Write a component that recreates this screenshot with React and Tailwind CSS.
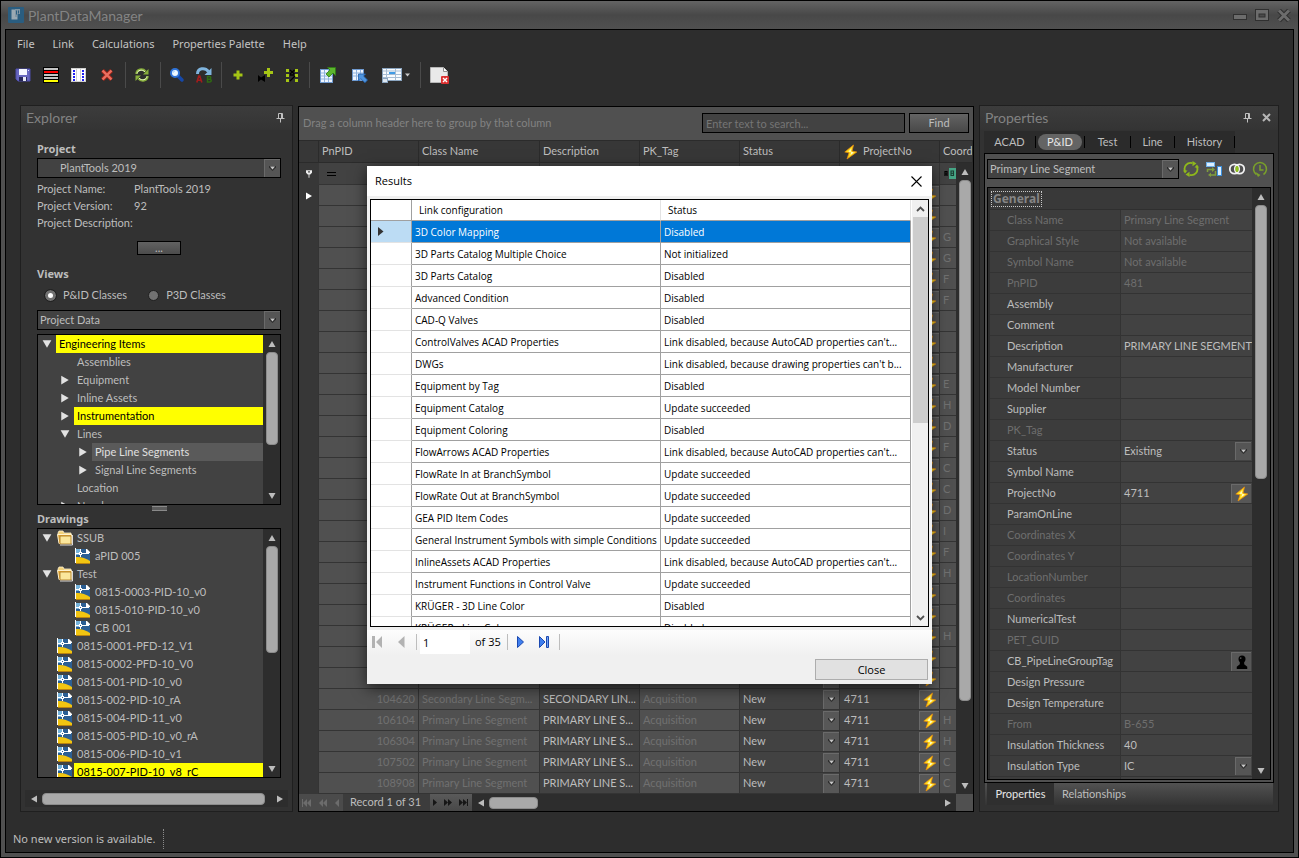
import React, { useState } from 'react';
import clsx from 'clsx';

const viewTree = [
  { label: 'Engineering Items', level: 0, open: true, mark: true },
  { label: 'Assemblies', level: 1 },
  { label: 'Equipment', level: 1, open: false },
  { label: 'Inline Assets', level: 1, open: false },
  { label: 'Instrumentation', level: 1, open: false, mark: true },
  { label: 'Lines', level: 1, open: true },
  { label: 'Pipe Line Segments', level: 2, open: false, selected: true },
  { label: 'Signal Line Segments', level: 2, open: false },
  { label: 'Location', level: 1 },
  { label: 'Nozzles', level: 1, open: false },
];

const drawingTree = [
  { label: 'SSUB', level: 0, open: true, icon: 'folder' },
  { label: 'aPID 005', level: 1, icon: 'file' },
  { label: 'Test', level: 0, open: true, icon: 'folder' },
  { label: '0815-0003-PID-10_v0', level: 1, icon: 'file' },
  { label: '0815-010-PID-10_v0', level: 1, icon: 'file' },
  { label: 'CB 001', level: 1, icon: 'file' },
  { label: '0815-0001-PFD-12_V1', level: 0, icon: 'file' },
  { label: '0815-0002-PFD-10_V0', level: 0, icon: 'file' },
  { label: '0815-001-PID-10_v0', level: 0, icon: 'file' },
  { label: '0815-002-PID-10_rA', level: 0, icon: 'file' },
  { label: '0815-004-PID-11_v0', level: 0, icon: 'file' },
  { label: '0815-005-PID-10_v0_rA', level: 0, icon: 'file' },
  { label: '0815-006-PID-10_v1', level: 0, icon: 'file' },
  { label: '0815-007-PID-10_v8_rC', level: 0, icon: 'file', mark: true },
];

const coords = ['', '', 'G', 'G', 'F', 'F', '', '', '', 'E', 'H', 'D', 'F', 'C', 'C', 'D', 'I', 'F', 'H', '', '', 'H', '', '', '', 'H', 'H', 'C', 'C'];

const records = {
  24: ['104620', 'Secondary Line Segm...', 'SECONDARY LIN...', 'Acquisition', 'New', '4711'],
  25: ['106104', 'Primary Line Segment', 'PRIMARY LINE S...', 'Acquisition', 'New', '4711'],
  26: ['106304', 'Primary Line Segment', 'PRIMARY LINE S...', 'Acquisition', 'New', '4711'],
  27: ['107502', 'Primary Line Segment', 'PRIMARY LINE S...', 'Acquisition', 'New', '4711'],
  28: ['108908', 'Primary Line Segment', 'PRIMARY LINE S...', 'Acquisition', 'New', '4711'],
};

const properties = [
  { name: 'Class Name', value: 'Primary Line Segment', off: true },
  { name: 'Graphical Style', value: 'Not available', off: true },
  { name: 'Symbol Name', value: 'Not available', off: true },
  { name: 'PnPID', value: '481', off: true },
  { name: 'Assembly' },
  { name: 'Comment' },
  { name: 'Description', value: 'PRIMARY LINE SEGMENT' },
  { name: 'Manufacturer' },
  { name: 'Model Number' },
  { name: 'Supplier' },
  { name: 'PK_Tag', off: true },
  { name: 'Status', value: 'Existing', type: 'select' },
  { name: 'Symbol Name' },
  { name: 'ProjectNo', value: '4711', type: 'bolt' },
  { name: 'ParamOnLine' },
  { name: 'Coordinates X', off: true },
  { name: 'Coordinates Y', off: true },
  { name: 'LocationNumber', off: true },
  { name: 'Coordinates', off: true },
  { name: 'NumericalTest' },
  { name: 'PET_GUID', off: true },
  { name: 'CB_PipeLineGroupTag', type: 'pawn' },
  { name: 'Design Pressure' },
  { name: 'Design Temperature' },
  { name: 'From', value: 'B-655', off: true },
  { name: 'Insulation Thickness', value: '40' },
  { name: 'Insulation Type', value: 'IC', type: 'select' },
  { name: '' },
];

const acad = "Link disabled, because AutoCAD properties can't...";

const results = [
  ['3D Color Mapping', 'Disabled'],
  ['3D Parts Catalog Multiple Choice', 'Not initialized'],
  ['3D Parts Catalog', 'Disabled'],
  ['Advanced Condition', 'Disabled'],
  ['CAD-Q Valves', 'Disabled'],
  ['ControlValves ACAD Properties', acad],
  ['DWGs', "Link disabled, because drawing properties can't b..."],
  ['Equipment by Tag', 'Disabled'],
  ['Equipment Catalog', 'Update succeeded'],
  ['Equipment Coloring', 'Disabled'],
  ['FlowArrows ACAD Properties', acad],
  ['FlowRate In at BranchSymbol', 'Update succeeded'],
  ['FlowRate Out at BranchSymbol', 'Update succeeded'],
  ['GEA PID Item Codes', 'Update succeeded'],
  ['General Instrument Symbols with simple Conditions', 'Update succeeded'],
  ['InlineAssets ACAD Properties', acad],
  ['Instrument Functions in Control Valve', 'Update succeeded'],
  ['KRÜGER - 3D Line Color', 'Disabled'],
  ['KRÜGER - Line Color', 'Disabled'],
];

/* ---------- icons ---------- */

const Svg = ({ size = 16, className, children }) => (
  <svg width={size} height={size} viewBox="0 0 16 16" className={clsx('shrink-0', className)} aria-hidden="true">
    {children}
  </svg>
);

const AppIcon = () => (
  <Svg>
    <rect width="16" height="16" rx="1" fill="#2a5d80" />
    <path d="M3.5 2.5h5l1 1v9h-6z" fill="#9aa9b3" />
    <path d="M7 2h5v5H9v3H7z" fill="#8296a4" />
    <path d="M8.5 3.5v4M10.5 3.5v3" stroke="#2a5d80" />
  </Svg>
);

const SaveIcon = () => (
  <Svg>
    <path d="M1 2h14v12H3l-2-2z" fill="#6666bf" />
    <path d="M1 2h14v12H3l-2-2z" fill="none" stroke="#4e4eac" />
    <rect x="4" y="2" width="8" height="6" fill="#f4f6ff" />
    <rect x="4" y="10" width="8" height="4" fill="#26265a" />
    <rect x="8" y="10" width="3" height="4" fill="#e6e8f5" />
    <rect x="13" y="3" width="1" height="1" fill="#dfe3ff" />
  </Svg>
);

const RowsIcon = () => (
  <Svg>
    <rect width="16" height="16" fill="#000" />
    <path d="M1 2h14M1 8h14M1 11h14" stroke="#c4c4c4" strokeWidth="2" />
    <path d="M1 5h14" stroke="#f00" strokeWidth="2" />
    <path d="M1 14h14" stroke="#ff0" strokeWidth="2" />
  </Svg>
);

const ColumnsIcon = () => (
  <Svg>
    <rect y="1" width="15" height="14" fill="#fff" />
    <path d="M0 1.5h15M5.500 1v14M9.500 1v14M0 14.500h15M.5 1v14M14.500 1v14" stroke="#cfcfcf" />
    <path d="M3 3v11M12 3v11" stroke="#1f1ff0" strokeWidth="2" strokeDasharray="2 1" />
  </Svg>
);

const DeleteIcon = () => (
  <Svg>
    <path d="M3.500 3.500l9 9M12.500 3.500l-9 9" stroke="#a32418" strokeWidth="4" />
    <path d="M3.500 3.500l9 9M12.500 3.500l-9 9" stroke="#ea6f60" strokeWidth="2.400" />
  </Svg>
);

const RefreshIcon = () => (
  <Svg>
    <path d="M2.500 7C2.500 2.500 8.500 1 11.500 4.500" fill="none" stroke="#86ad3a" strokeWidth="2.400" />
    <path d="M14.500 2v5.500H9z" fill="#86ad3a" />
    <path d="M13.500 9c0 4.500-6 6-9 2.500" fill="none" stroke="#86ad3a" strokeWidth="2.400" />
    <path d="M1.500 14V8.500H7z" fill="#86ad3a" />
    <path d="M3 6.500C3.500 3 8 2 11 4.800M13 9.500c-.5 3.500-5 4.500-8 1.700" fill="none" stroke="#e9f5c8" strokeWidth="1" />
  </Svg>
);

const SearchIcon = () => (
  <Svg>
    <path d="M9 9l4 4" stroke="#1648a8" strokeWidth="3.500" strokeLinecap="round" />
    <circle cx="6" cy="6" r="4" fill="#eef8ff" stroke="#2f73d8" strokeWidth="2" />
    <path d="M4 6a2 2 0 012-2" fill="none" stroke="#a6d2ff" />
  </Svg>
);

const ReplaceIcon = () => (
  <Svg>
    <path d="M1.500 7C1.500 1 9 0 12.500 4.500" fill="none" stroke="#7fb4de" strokeWidth="3" />
    <path d="M15.500 1v7H8.500z" fill="#7fb4de" />
    <path d="M.8 15.500L2.800 9h1l2 6.500M1.500 13.300h3.500" fill="none" stroke="#a31c1c" strokeWidth="1.600" />
    <path d="M11.500 9.500v5.500h2.400c1.800 0 1.800-2.800 0-2.800h-2.400 2c1.700 0 1.700-2.700 0-2.700z" fill="none" stroke="#2f6a12" strokeWidth="1.500" />
  </Svg>
);

const PlusIcon = () => (
  <Svg>
    <path d="M8 3.500v9M3.500 8h9" stroke="#a5c515" strokeWidth="3" />
  </Svg>
);

const ValvePlusIcon = () => (
  <Svg>
    <path d="M1 8l3 2.500L8 8v7l-4-2.500L1 15z" fill="#000" />
    <path d="M11.500 1v9M7 5.500h9" stroke="#a5c515" strokeWidth="3" />
  </Svg>
);

const ValveGridIcon = () => (
  <Svg>
    <path d="M2 3.500h3M2 8.500h3M2 13.500h3M11 3.500h3M11 8.500h3M11 13.500h3" stroke="#a5c515" strokeWidth="3" />
    <path d="M6 3l4.500 4M10.500 3L6 7M11 9l-5 5M6 8l4 0" stroke="#000" strokeWidth="1.300" />
  </Svg>
);

const ExportIcon = () => (
  <Svg>
    <rect x=".5" y="2.500" width="12" height="13" fill="#eef5ff" stroke="#6f9ad0" />
    <path d="M1 6h11M1 9h11M1 12h11M4.500 3v12M8.500 3v12" stroke="#8fb2dd" />
    <path d="M15.500.5v8l-2.500-2.500-4 4-3-3 4-4L7.500.5z" fill="#5cb52e" stroke="#2f7d12" strokeWidth=".8" />
  </Svg>
);

const ImportIcon = () => (
  <Svg>
    <rect x=".5" y="2.500" width="11" height="11" fill="#eef5ff" stroke="#6f9ad0" />
    <path d="M1 6h10M1 9h10M4.500 3v10M8.500 3v10" stroke="#8fb2dd" />
    <path d="M6.500 7h7l-2 2 4 4-2.500 2.700-4.300-4-2.200 2.300z" fill="#4f94dd" stroke="#1f5dab" strokeWidth=".8" />
  </Svg>
);

const LayoutIcon = () => (
  <svg width="20" height="16" viewBox="0 0 20 16" aria-hidden="true">
    <rect x=".5" y="1.500" width="19" height="12" fill="#f7fbff" stroke="#8ba5c0" />
    <path d="M1 4h18M4.500 2v11M13.500 2v11M1 7.500h18M1 10.500h18" stroke="#a7bdd4" />
    <path d="M7 6h6" stroke="#3f9be6" strokeWidth="2" />
    <rect x=".5" y="11.500" width="5" height="4" fill="#dde8f2" stroke="#8ba5c0" />
  </svg>
);

const ClosePageIcon = () => (
  <svg width="19" height="18" viewBox="0 0 19 18" aria-hidden="true">
    <path d="M.5 1.500h13l4 4v11H.5z" fill="#e9e9e9" stroke="#b7b7b7" />
    <path d="M13.500 1.500v4h4" fill="#fff" stroke="#8e8e8e" />
    <rect x="11" y="10" width="8" height="8" rx="1" fill="#dc3030" />
    <path d="M13 12l4 4M17 12l-4 4" stroke="#fff" strokeWidth="1.400" />
  </svg>
);

const PinIcon = () => (
  <svg width="9" height="11" viewBox="0 0 9 11" aria-hidden="true">
    <path d="M2.500 6V1.500h4V6M.5 6.500h8M4.500 7v3.500M5.500 1.500V6" fill="none" stroke="#c0c0c0" />
  </svg>
);

const FolderIcon = () => (
  <Svg>
    <path d="M1 3l1-2h4l1 2h7v2H1z" fill="#f3d27a" stroke="#fff3cf" strokeWidth=".8" />
    <path d="M.5 4.500h14v9H2z" fill="#e3a93c" stroke="#fff3cf" />
    <rect x="3" y="6" width="11" height="8" fill="#fbe79c" stroke="#a8731a" strokeWidth=".8" />
    <path d="M15.500 5v10H3" fill="none" stroke="#fff" strokeWidth=".8" />
  </Svg>
);

const DwgIcon = () => (
  <Svg>
    <path d="M1 1h10l4 4v10H1z" fill="#2c5f94" />
    <path d="M1 1h5v6H1z" fill="#76b4dc" />
    <path d="M.5 0v15" stroke="#fff" />
    <path d="M11 1h1l3 3v1h-4z" fill="#fff" />
    <path d="M5.500 1v8M1 5.500h13" stroke="#fff" />
    <rect x="4.500" y="4.500" width="2" height="2" fill="#2c5f94" stroke="#fff" />
    <path d="M1 9c5-.5 9 1 14 4v3H1z" fill="#f2c511" />
    <path d="M1 15.500h14" stroke="#b98310" />
  </Svg>
);

const BoltIcon = () => (
  <Svg>
    <path d="M10.500 1L1.800 8l4.300.8L4 15l9.800-7-4.800-1z" fill="#ffdf1c" stroke="#e58a10" strokeWidth=".8" />
    <path d="M8.500 4.500L5.300 7.400l3 .8-1 3L10.800 8.400 7.600 7.600z" fill="#fffbd0" />
  </Svg>
);

const PawnIcon = () => (
  <Svg size={14}>
    <circle cx="8" cy="4.500" r="4" fill="#000" />
    <path d="M5.500 7h5v3.500l3.500 3V16H2v-2.500l3.500-3z" fill="#000" />
    <circle cx="6.500" cy="3.500" r="1" fill="#555" />
  </Svg>
);

const SyncRing = () => (
  <Svg>
    <path d="M2.200 10.500A6 6 0 019.500 2.200M13.800 5.500A6 6 0 016.500 13.800" fill="none" stroke="#8fb81c" strokeWidth="1.800" />
    <path d="M9.500 0l4 2.500-4 2.700zM6.500 16l-4-2.500 4-2.700z" fill="#8fb81c" />
    <path d="M11.500 6.500h4.500l-2-3zM4.500 9.500H0l2 3z" fill="#8fb81c" />
  </Svg>
);

const TransferIcon = () => (
  <Svg>
    <rect x=".5" y="1.500" width="8" height="4" fill="#dcefff" stroke="#6fb0e8" />
    <rect x="11.500" y="5.500" width="4" height="9" fill="#dcefff" stroke="#3c8fdc" />
    <path d="M1.500 11V8.500H7M9.500 10v4H4" fill="none" stroke="#7f9d3c" strokeWidth="1.500" />
    <path d="M6 6l3 2.500L6 11zM5 11.500L2 14l3 2z" fill="#7f9d3c" />
  </Svg>
);

const VennIcon = () => (
  <Svg>
    <circle cx="5.500" cy="8" r="4.700" fill="none" stroke="#f2f2f2" strokeWidth="1.800" />
    <circle cx="10.500" cy="8" r="4.700" fill="none" stroke="#f2f2f2" strokeWidth="1.800" />
    <ellipse cx="8" cy="8" rx="1.700" ry="3" fill="#8fc21c" />
  </Svg>
);

const HistoryIcon = () => (
  <Svg>
    <path d="M4.500 13.500A6.500 6.500 0 1111.500 13.500" fill="none" stroke="#7aa02a" strokeWidth="1.500" />
    <path d="M8 4v5h3.500" fill="none" stroke="#7aa02a" strokeWidth="1.500" />
    <path d="M3.500 11l5 3-2.500 2z" fill="#7aa02a" />
  </Svg>
);

const Tri = ({ dir, size = 8, className = 'fill-[#bdbdbd]' }) => (
  <svg width={size} height={size} viewBox="0 0 8 8" className={clsx('shrink-0', className)} aria-hidden="true">
    {dir === 'up' && <path d="M4 1l3.500 6h-7z" />}
    {dir === 'down' && <path d="M4 7L.5 1h7z" />}
    {dir === 'left' && <path d="M1 4l6-3.500v7z" />}
    {dir === 'right' && <path d="M7 4L1 .5v7z" />}
  </svg>
);

const DropArrow = () => (
  <svg width="7" height="5" viewBox="0 0 7 5" className="shrink-0" aria-hidden="true">
    <path d="M0 0h7v1.500L3.500 5 0 1.500z" fill="#2e2e2e" />
    <path d="M1 .5h5L3.500 3.500z" fill="#c8c8c8" />
  </svg>
);

/* ---------- shared controls ---------- */

const ToolButton = ({ label, className = 'w-7', children }) => (
  <button type="button" aria-label={label} className={clsx('flex h-7 items-center justify-center', className)}>
    {children}
  </button>
);

const Separator = () => <span className="ml-1 mr-0.5 h-[26px] w-px bg-[#4a4a4a]" />;

const DropButton = () => (
  <span className="pointer-events-none absolute inset-y-px right-px flex w-4 items-center justify-center border-l border-t border-[#6a6a6a] bg-[#555555]">
    <DropArrow />
  </span>
);

const Combo = ({ label, value, className, pad = 'pl-[2px]' }) => (
  <div className={clsx('relative', className)}>
    <select aria-label={label} className={clsx('block h-5 w-full appearance-none border border-black bg-[#424242] leading-4 outline-none', pad)}>
      <option>{value}</option>
    </select>
    <DropButton />
  </div>
);

const VScroll = ({ thumb, className = 'w-[17px]' }) => (
  <div className={clsx('flex shrink-0 flex-col items-center bg-[#2d2d2d]', className)}>
    <span className="flex h-[17px] shrink-0 items-center"><Tri dir="up" /></span>
    <span className={clsx('w-3 rounded-sm border border-[#8c8c8c] bg-[#a9a9a9]', thumb)} />
    <span className="mt-auto flex h-[17px] shrink-0 items-center"><Tri dir="down" /></span>
  </div>
);

const TreeRow = ({ item }) => (
  <li className="flex h-[18px] items-stretch">
    {Array.from({ length: item.level }).map((_, i) => <span key={i} className="w-[18px] shrink-0" />)}
    <span className="flex w-[18px] shrink-0 items-center justify-center">
      {item.open !== undefined && <Tri dir={item.open ? 'down' : 'right'} size={10} className="fill-[#e2e2e2]" />}
    </span>
    {item.icon && (
      <span className="flex w-[18px] shrink-0 items-center justify-center">
        {item.icon === 'folder' ? <FolderIcon /> : <DwgIcon />}
      </span>
    )}
    <span
      className={clsx(
        'flex flex-1 items-center whitespace-nowrap pl-[3px]',
        item.mark && 'bg-[#ffff00] text-black',
        item.selected && 'bg-[#5a5a5a] text-[#e0e0e0]'
      )}
    >
      {item.label}
    </span>
  </li>
);

const Tree = ({ items, thumb, className }) => (
  <div className={clsx('flex overflow-hidden border border-black bg-[#424242]', className)}>
    <ul className="min-w-0 flex-1 overflow-hidden">
      {items.map((item) => <TreeRow key={item.label} item={item} />)}
    </ul>
    <VScroll thumb={thumb} />
  </div>
);

const Heading = ({ children, className }) => (
  <h3 className={clsx("h-4 shrink-0 font-['Noto_Sans',sans-serif] text-[11px] font-bold leading-4", className)}>{children}</h3>
);

/* ---------- explorer ---------- */

const radio = 'size-[11px] appearance-none rounded-full border border-[#202020] bg-[#727272] checked:border-[3px] checked:border-[#727272] checked:bg-white checked:outline checked:outline-[#202020]';

const Explorer = () => {
  const [view, setView] = useState('pid');

  return (
    <aside className="flex w-[273px] shrink-0 flex-col border border-[#1f1f1f] bg-[#323232]">
      <header className="flex h-6 shrink-0 items-center justify-between bg-linear-to-b from-[#3c3c3c] to-[#343434] pb-px pl-[5px] pr-[7px]">
        <h2 className="text-[14px] text-[#828282]">Explorer</h2>
        <button type="button" aria-label="Pin explorer"><PinIcon /></button>
      </header>

      <div className="flex min-h-0 flex-1 flex-col pl-4 pr-[11px] pt-[11px]">
        <Heading>Project</Heading>
        <Combo label="Project" value="PlantTools 2019" pad="pl-[22px]" className="mt-px" />
        <dl className="mt-[2px] grid grid-cols-[97px_1fr] leading-[17px]">
          <dt>Project Name:</dt><dd>PlantTools 2019</dd>
          <dt>Project Version:</dt><dd>92</dd>
          <dt>Project Description:</dt><dd />
        </dl>
        <button type="button" className="ml-[100px] mt-[10px] flex h-[14px] w-11 shrink-0 items-center justify-center border border-black bg-linear-to-b from-[#626262] to-[#4c4c4c] leading-3">
          ...
        </button>

        <Heading className="mt-[11px]">Views</Heading>
        <div className="mt-1 flex h-[18px] items-center gap-[21px] pl-2">
          <label className="flex items-center gap-[7px]">
            <input type="radio" name="view" checked={view === 'pid'} onChange={() => setView('pid')} className={radio} />
            P&amp;ID Classes
          </label>
          <label className="flex items-center gap-[7px]">
            <input type="radio" name="view" checked={view === 'p3d'} onChange={() => setView('p3d')} className={radio} />
            P3D Classes
          </label>
        </div>
        <Combo label="View data" value="Project Data" className="mt-[6px]" />
        <Tree items={viewTree} thumb="h-[93px]" className="mt-1 h-[171px] shrink-0" />
        <div className="flex h-[6px] shrink-0 items-center justify-center">
          <span className="h-[5px] w-[15px] border-y border-[#8a8a8a] bg-[#5c5c5c]" />
        </div>
        <Heading className="mb-px">Drawings</Heading>
        <Tree items={drawingTree} thumb="h-[107px]" className="min-h-0 flex-1" />
      </div>

      <div className="mx-1 mb-1 mt-3 flex h-[17px] shrink-0 items-center bg-[#2d2d2d]">
        <span className="flex w-[17px] justify-center"><Tri dir="left" /></span>
        <span className="h-3 flex-1 rounded-sm border border-[#8c8c8c] bg-[#a9a9a9]" />
        <span className="ml-[6px] flex w-[17px] justify-center"><Tri dir="right" /></span>
      </div>
    </aside>
  );
};

/* ---------- grid ---------- */

const GridCols = () => (
  <colgroup>
    <col className="w-5" />
    <col className="w-[100px]" />
    <col className="w-[121px]" />
    <col className="w-[100px]" />
    <col className="w-[100px]" />
    <col className="w-[100px]" />
    <col className="w-[100px]" />
    <col />
  </colgroup>
);

const cell = 'h-[21px] border-b border-r border-[#343434] p-0 px-[3px]';
const filterCell = 'border-b border-r border-[#343434] bg-[#424242] p-0';

const CellButton = ({ label, className, children }) => (
  <button type="button" aria-label={label} className={clsx('ml-auto flex h-[19px] shrink-0 items-center justify-center border-l border-t border-[#6a6a6a] bg-[#575757]', className)}>
    {children}
  </button>
);

const DataGrid = () => (
  <section className="mt-px flex min-w-0 flex-1 flex-col border border-black bg-[#373737]">
    <div className="flex h-[34px] shrink-0 items-center border-b border-[#2b2b2b] bg-[#505050] pb-px pl-1 pr-1">
      <span className="flex-1 text-[#828282]">Drag a column header here to group by that column</span>
      <input
        type="text"
        aria-label="Search"
        placeholder="Enter text to search..."
        className="h-5 w-[203px] border border-black bg-[#424242] px-[3px] outline-none placeholder:text-[#757575]"
      />
      <button type="button" className="ml-1 h-5 w-[60px] border border-black bg-linear-to-b from-[#646464] to-[#484848] leading-4">Find</button>
    </div>

    <table className="w-full shrink-0 table-fixed border-separate border-spacing-0 text-left">
      <GridCols />
      <thead>
        <tr>
          {['', 'PnPID', 'Class Name', 'Description', 'PK_Tag', 'Status', 'ProjectNo', 'Coord'].map((h) => (
            <th key={h} className="h-[22px] overflow-hidden whitespace-nowrap border-b border-r border-[#2b2b2b] p-0 px-[3px] font-normal">
              {h === 'ProjectNo' ? <span className="flex items-center gap-1"><BoltIcon />{h}</span> : h}
            </th>
          ))}
        </tr>
      </thead>
    </table>

    <div className="flex min-h-0 flex-1 overflow-hidden">
      <div className="min-w-0 flex-1 overflow-hidden">
        <table className="w-full table-fixed border-separate border-spacing-0 whitespace-nowrap">
          <GridCols />
          <tbody>
            <tr>
              <td className="h-[22px] p-0">
                <svg width="6" height="8" viewBox="0 0 7 9" className="mx-auto" aria-hidden="true">
                  <path d="M0 0h7v3L5 5H4v4H3V5H2L0 3z" fill="#eee" /><circle cx="3.500" cy="2" r="1" fill="#373737" />
                </svg>
              </td>
              <td className={clsx(filterCell, 'pl-2')}>
                <span className="block h-1 w-[9px] border-y border-black" />
              </td>
              <td className={filterCell} />
              <td className={filterCell} />
              <td className={filterCell} />
              <td className={filterCell} />
              <td className={filterCell} />
              <td className={clsx(filterCell, 'border-r-0 pl-1')}>
                <svg width="12" height="11" viewBox="0 0 12 11" aria-hidden="true">
                  <path d="M1 8V3.500h2V8M1 6h2" fill="none" stroke="#000" strokeWidth="1.200" />
                  <rect x="5" width="7" height="11" fill="#46a585" />
                  <path d="M7 3h2.500v4.500H7zM7 5.300h2.500" fill="none" stroke="#1c3d33" strokeWidth="1.100" />
                </svg>
              </td>
            </tr>
            {coords.map((c, i) => {
              const [id, cls, desc, tag, status, project] = records[i] || [];
              return (
                <tr key={i}>
                  <td className="h-[21px] border-r border-[#343434] p-0">
                    {i === 0 && <Tri dir="right" className="mx-auto fill-white" />}
                  </td>
                  <td className={clsx(cell, 'bg-[#505050] text-right text-[#707070]')}>{id}</td>
                  <td className={clsx(cell, 'bg-[#505050] text-[#707070]')}>{cls}</td>
                  <td className={clsx(cell, 'bg-[#424242]')}>{desc}</td>
                  <td className={clsx(cell, 'bg-[#505050] text-[#707070]')}>{tag}</td>
                  <td className={clsx(cell, 'bg-[#424242] pr-0')}>
                    <span className="flex items-center">
                      {status}
                      <CellButton label="Choose status" className="w-4"><DropArrow /></CellButton>
                    </span>
                  </td>
                  <td className={clsx(cell, 'bg-[#424242] pr-0')}>
                    <span className="flex items-center pl-px">
                      {project}
                      <CellButton label="Linked value" className="w-5"><BoltIcon /></CellButton>
                    </span>
                  </td>
                  <td className="border-b border-[#343434] bg-[#505050] p-0 pl-[3px] text-[#707070]">{c}</td>
                </tr>
              );
            })}
          </tbody>
        </table>
      </div>
      <VScroll thumb="h-[521px]" />
    </div>

    <footer className="flex h-[17px] shrink-0 items-center bg-[#2d2d2d]">
      <div className="flex h-full w-11 items-center justify-around bg-[#4b4b4b] fill-[#6c6c6c]">
        <button type="button" aria-label="First record" disabled><svg width="10" height="8"><path d="M0 0h1v8H0zM5 0v8L1 4zM9 0v8L5 4z" /></svg></button>
        <button type="button" aria-label="Previous page" disabled><svg width="9" height="8"><path d="M4 0v8L0 4zM8 0v8L4 4z" /></svg></button>
        <button type="button" aria-label="Previous record" disabled><svg width="5" height="8"><path d="M4 0v8L0 4z" /></svg></button>
      </div>
      <span className="w-[87px] self-stretch bg-[#3c3c3c] pl-[7px] leading-4">Record 1 of 31</span>
      <div className="flex h-full w-[42px] items-center justify-around bg-linear-to-b from-[#5a5a5a] to-[#484848] fill-[#161616]">
        <button type="button" aria-label="Next record"><svg width="5" height="7"><path d="M0 0v7l4-3.500z" /></svg></button>
        <button type="button" aria-label="Next page"><svg width="9" height="7"><path d="M0 0v7l4-3.500zM4 0v7l4-3.500z" /></svg></button>
        <button type="button" aria-label="Last record"><svg width="10" height="7"><path d="M0 0v7l4-3.500zM4 0v7l4-3.500zM8 0h1v7H8z" /></svg></button>
      </div>
      <span className="flex w-[17px] justify-center"><Tri dir="left" /></span>
      <span className="h-3 w-[49px] rounded-sm border border-[#8c8c8c] bg-[#a9a9a9]" />
      <span className="ml-auto flex w-[17px] justify-center"><Tri dir="right" /></span>
      <span className="h-full w-[17px] bg-[#505050]" />
    </footer>
  </section>
);

/* ---------- properties ---------- */

const Properties = () => (
  <aside className="flex w-[300px] shrink-0 flex-col border border-[#1f1f1f] bg-[#323232]">
    <header className="mb-px flex h-6 shrink-0 items-center bg-linear-to-b from-[#3c3c3c] to-[#343434] pb-px pl-[5px] pr-[7px]">
      <h2 className="flex-1 text-[14px] text-[#828282]">Properties</h2>
      <button type="button" aria-label="Pin properties"><PinIcon /></button>
      <button type="button" aria-label="Close properties" className="ml-[10px]">
        <svg width="9" height="9" viewBox="0 0 9 9" aria-hidden="true"><path d="M1 1l7 7M8 1L1 8" stroke="#b5b5b5" strokeWidth="2" /></svg>
      </button>
    </header>

    <nav className="ml-1 flex h-[22px] w-[251px] shrink-0 items-center bg-[#2b2b2b]">
      <button type="button" className="w-[51px]">ACAD</button>
      <span className="h-3 w-px bg-black" />
      <button type="button" className="mx-0.5 h-4 w-[44px] rounded-full bg-[#646464] leading-4 text-[#e6e6e6]">P&amp;ID</button>
      <span className="h-3 w-px bg-black" />
      <button type="button" className="w-[45px]">Test</button>
      <span className="h-3 w-px bg-black" />
      <button type="button" className="w-[43px]">Line</button>
      <span className="h-3 w-px bg-black" />
      <button type="button" className="flex-1">History</button>
      <span className="h-3 w-px bg-black" />
    </nav>

    <div className="mx-1 flex min-h-0 flex-1 flex-col border border-black bg-[#505050] px-0.5 pb-0.5 pt-[5px]">
      <div className="flex h-5 shrink-0 items-center justify-between pr-[3px]">
        <Combo label="Class" value="Primary Line Segment" className="w-[192px]" />
        <div className="flex items-center gap-[7px]">
          <button type="button" aria-label="Refresh"><SyncRing /></button>
          <button type="button" aria-label="Transfer"><TransferIcon /></button>
          <button type="button" aria-label="Compare"><VennIcon /></button>
          <button type="button" aria-label="History"><HistoryIcon /></button>
        </div>
      </div>

      <div className="mt-2 flex min-h-0 flex-1 overflow-hidden border border-black bg-[#2d2d2d] pl-0.5">
        <div className="min-w-0 flex-1 overflow-hidden">
          <table className="w-full table-fixed border-separate border-spacing-0 whitespace-nowrap text-left">
            <colgroup><col /><col className="w-[131px]" /></colgroup>
            <thead>
              <tr>
                <th colSpan={2} className="h-[22px] border-b border-[#2f2f2f] bg-[#393939] p-0 pl-px font-['Noto_Sans',sans-serif] text-[12px] font-bold leading-[14px] text-[#858585]">
                  <span className="inline-block border border-dotted border-[#c8c8c8] px-px">General</span>
                </th>
              </tr>
            </thead>
            <tbody>
              {properties.map((p, i) => (
                <tr key={i} className={clsx(p.off && 'text-[#6e6e6e]')}>
                  <th scope="row" className="h-[21px] border-b border-r border-[#333333] bg-[#3c3c3c] p-0 pl-[17px] font-normal">{p.name}</th>
                  <td className="border-b border-[#333333] bg-[#424242] p-0">
                    {p.type === 'select' ? (
                      <span className="relative block">
                        <select aria-label={p.name} className="block h-5 w-full appearance-none pl-[3px] outline-none">
                          <option>{p.value}</option>
                        </select>
                        <DropButton />
                      </span>
                    ) : (
                      <span className="flex items-center pl-[3px] pr-px">
                        {p.value}
                        {p.type === 'bolt' && <CellButton label="Linked value" className="w-5"><BoltIcon /></CellButton>}
                        {p.type === 'pawn' && <CellButton label="Group tag" className="w-5"><PawnIcon /></CellButton>}
                      </span>
                    )}
                  </td>
                </tr>
              ))}
            </tbody>
          </table>
        </div>
        <VScroll thumb="h-[274px]" className="w-[18px]" />
      </div>
    </div>

    <nav className="mx-[5px] mb-[6px] flex h-[22px] shrink-0 bg-linear-to-b from-[#525252] to-[#343434] pl-0.5">
      <button type="button" className="w-[67px] bg-[#2f2f2f] text-[#e6e6e6]">Properties</button>
      <button type="button" className="pl-2">Relationships</button>
    </nav>
  </aside>
);

/* ---------- results dialog ---------- */

const ResultsDialog = () => (
  <div className="absolute inset-0 flex items-center justify-center pb-2">
    <div role="dialog" aria-label="Results" className="flex h-[518px] w-[565px] flex-col bg-[#f0f0f0] font-['Open_Sans',sans-serif] text-[10px] text-black shadow-[0_4px_14px_rgba(0,0,0,0.6)]">
      <header className="mb-[3px] flex h-[30px] shrink-0 items-center justify-between bg-white pl-2 pr-[10px]">
        <h2 className="text-[11px]">Results</h2>
        <button type="button" aria-label="Close dialog">
          <svg width="11" height="11" viewBox="0 0 11 11" aria-hidden="true"><path d="M.5.5l10 10M10.500.5l-10 10" stroke="#000" strokeWidth="1.100" /></svg>
        </button>
      </header>

      <div className="mx-[3px] flex min-h-0 flex-1 overflow-hidden border border-black bg-white">
        <div className="mr-px min-w-0 flex-1 overflow-hidden">
          <table className="w-full table-fixed border-separate border-spacing-0 whitespace-nowrap text-left">
            <colgroup><col className="w-[41px]" /><col className="w-[249px]" /><col /></colgroup>
            <thead>
              <tr>
                <th className="h-[21px] border-b border-r border-[#a0a0a0] p-0" />
                <th className="border-b border-r border-b-[#a0a0a0] border-r-[#e3e3e3] p-0 pl-[7px] font-normal">Link configuration</th>
                <th className="border-b border-r border-b-[#a0a0a0] border-r-[#e3e3e3] p-0 pl-[7px] font-normal">Status</th>
              </tr>
            </thead>
            <tbody>
              {results.map(([name, status], i) => (
                <tr key={name} className={clsx(i === 0 && 'bg-[#0078d7] text-white')}>
                  <td className={clsx('h-[22px] border-b border-r border-b-[#e3e3e3] border-r-[#a0a0a0] p-0 pl-[7px]', i === 0 && 'bg-[#bcdcf4]')}>
                    {i === 0 && <svg width="6" height="9" viewBox="0 0 6 9" aria-hidden="true"><path d="M0 0v9l5.500-4.500z" fill="#333" /></svg>}
                  </td>
                  <td className="border-b border-r border-[#a0a0a0] p-0 pl-[3px] pt-px">{name}</td>
                  <td className="border-b border-r border-[#a0a0a0] p-0 pl-[3px] pt-px">{status}</td>
                </tr>
              ))}
            </tbody>
          </table>
        </div>
        <div className="flex w-4 shrink-0 flex-col items-center bg-[#f0f0f0]">
          <span className="flex h-[17px] items-center"><svg width="9" height="6" viewBox="0 0 9 6"><path d="M1 5l3.500-3.500L8 5" fill="none" stroke="#505050" strokeWidth="1.800" /></svg></span>
          <span className="h-[206px] w-[15px] bg-[#cdcdcd]" />
          <span className="mt-auto flex h-[17px] items-center"><svg width="9" height="6" viewBox="0 0 9 6"><path d="M1 1l3.500 3.500L8 1" fill="none" stroke="#505050" strokeWidth="1.800" /></svg></span>
        </div>
      </div>

      <div className="mt-[3px] flex h-[26px] shrink-0 items-center bg-linear-to-b from-[#fdfdfd] to-[#f0f0f0] pb-[2px] pl-[5px]">
        <button type="button" aria-label="First" disabled><svg width="10" height="12" viewBox="0 0 10 12"><path d="M0 0h3v12H0zM10 0v12L4 6z" fill="#b2b2b2" /></svg></button>
        <button type="button" aria-label="Previous" disabled className="ml-4"><svg width="7" height="12" viewBox="0 0 7 12"><path d="M6.500 0v12L0 6z" fill="#b2b2b2" /></svg></button>
        <span className="ml-[11px] h-4 w-px bg-[#bdbdbd]" />
        <input type="text" aria-label="Position" defaultValue="1" className="ml-[3px] h-6 w-[50px] bg-white px-[3px] text-[11px] outline-none" />
        <span className="ml-[5px] text-[11px]">of 35</span>
        <span className="ml-[6px] h-4 w-px bg-[#bdbdbd]" />
        <button type="button" aria-label="Next" className="ml-[9px]"><svg width="7" height="12" viewBox="0 0 7 12"><path d="M.5.5v11L6.500 6z" fill="#3f7fee" stroke="#1b48b0" /></svg></button>
        <button type="button" aria-label="Last" className="ml-[15px]"><svg width="10" height="12" viewBox="0 0 10 12"><path d="M.5.5v11L6 6z" fill="#3f7fee" stroke="#1b48b0" /><path d="M7.500.5h2v11h-2z" fill="#6ea2f5" stroke="#1b48b0" /></svg></button>
        <span className="ml-[10px] h-4 w-px bg-[#bdbdbd]" />
      </div>

      <button type="button" className="mb-1 mr-1 mt-[3px] h-[21px] w-[113px] shrink-0 self-end border border-[#adadad] bg-[#e1e1e1] text-[11px] leading-4">Close</button>
    </div>
  </div>
);

export default function App() {
  return (
    <div className="relative flex h-screen w-full flex-col overflow-hidden border border-black bg-[#505050] px-1 pb-1 font-['Lato',sans-serif] text-[11px] text-[#bdbdbd]">
      <header className="-mx-1 flex h-7 shrink-0 items-center gap-1 bg-linear-to-b from-[#646464] via-[#484848] to-[#505050] px-[7px]">
        <AppIcon />
        <h1 className="flex-1 text-[14px] text-[#848484]">PlantDataManager</h1>
        <button type="button" aria-label="Minimize" className="pt-1"><svg width="14" height="7"><rect x=".5" y=".5" width="13" height="5" fill="#6c6c6c" stroke="#303030" /></svg></button>
        <button type="button" aria-label="Maximize" className="ml-1"><svg width="14" height="12"><rect x=".5" y=".5" width="13" height="11" fill="#6c6c6c" stroke="#303030" /><rect x="4" y="5" width="6" height="3" fill="#4b4b4b" stroke="#303030" /></svg></button>
        <button type="button" aria-label="Close" className="ml-1"><svg width="14" height="13"><path d="M2 1.500l10 10M12 1.500l-10 10" stroke="#303030" strokeWidth="5" /><path d="M2 1.500l10 10M12 1.500l-10 10" stroke="#6c6c6c" strokeWidth="3" /></svg></button>
      </header>

      <div className="flex min-h-0 flex-1 flex-col border border-black bg-[#2d2d2d]">
        <nav className="flex h-7 shrink-0 items-center gap-[18px] pl-[11px] font-['Noto_Sans',sans-serif] text-[11px] text-[#c4c4c4]">
          <button type="button">File</button>
          <button type="button">Link</button>
          <button type="button">Calculations</button>
          <button type="button">Properties Palette</button>
          <button type="button">Help</button>
        </nav>

        <div className="flex h-[34px] shrink-0 items-center pl-[3px]">
          <ToolButton label="Save"><SaveIcon /></ToolButton>
          <ToolButton label="Row colors"><RowsIcon /></ToolButton>
          <ToolButton label="Columns"><ColumnsIcon /></ToolButton>
          <ToolButton label="Delete"><DeleteIcon /></ToolButton>
          <Separator />
          <ToolButton label="Refresh"><RefreshIcon /></ToolButton>
          <Separator />
          <ToolButton label="Search" className="w-[27px]"><SearchIcon /></ToolButton>
          <ToolButton label="Replace" className="w-[27px]"><ReplaceIcon /></ToolButton>
          <Separator />
          <ToolButton label="Add" className="w-[27px]"><PlusIcon /></ToolButton>
          <ToolButton label="Add valve" className="w-[27px]"><ValvePlusIcon /></ToolButton>
          <ToolButton label="Arrange" className="w-[27px]"><ValveGridIcon /></ToolButton>
          <Separator />
          <ToolButton label="Export" className="w-8"><ExportIcon /></ToolButton>
          <ToolButton label="Import" className="w-8"><ImportIcon /></ToolButton>
          <ToolButton label="Layout" className="w-10 gap-0.5"><LayoutIcon /><DropArrow /></ToolButton>
          <Separator />
          <ToolButton label="Close page" className="w-8"><ClosePageIcon /></ToolButton>
        </div>

        <main className="mt-[13px] flex min-h-0 flex-1 gap-[5px] px-[14px]">
          <Explorer />
          <DataGrid />
          <Properties />
        </main>

        <footer className="flex h-10 shrink-0 items-center gap-2 pl-[7px] pt-[14px] font-['Noto_Sans',sans-serif] text-[11px]">
          <span>No new version is available.</span>
          <span className="h-5 border-l border-dotted border-[#8a8a8a]" />
        </footer>
      </div>

      <ResultsDialog />
    </div>
  );
}
